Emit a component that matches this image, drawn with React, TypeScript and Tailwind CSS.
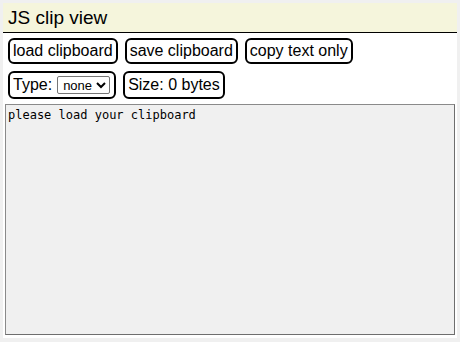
import { useState } from "react";

export default function App() {
  const [type, setType] = useState("none");

  return (
    <div className="min-h-[342px] bg-[#f0f0f0] p-[3px] font-['Liberation_Sans',Arial,sans-serif] text-black">
      <div className="bg-white pb-[3px]">
        <div className="flex h-[30px] items-center border-b border-black bg-[#f5f5dc] px-[5px] text-[19px] leading-none">
          JS clip view
        </div>

        <div className="flex gap-[7px] px-[5px] pt-[5px] text-[16px] leading-none">
          <button className="h-[26px] rounded-[6px] border-2 border-black px-[3px]">load clipboard</button>
          <button className="h-[26px] rounded-[6px] border-2 border-black px-[3px]">save clipboard</button>
          <button className="h-[26px] rounded-[6px] border-2 border-black px-[3px]">copy text only</button>
        </div>

        <div className="flex gap-[7px] px-[5px] pt-[7px] text-[16px] leading-none">
          <label className="flex h-[28px] items-center gap-[5px] rounded-[6px] border-2 border-black pl-[3px] pr-[4px]">
            Type:
            <select
              value={type}
              onChange={(e) => setType(e.target.value)}
              className="h-[18px] w-[53px] rounded-[2px] border border-[#767676] bg-white pl-[1px] text-[13px] leading-none"
            >
              <option value="none">none</option>
              <option value="text">text</option>
              <option value="html">html</option>
            </select>
          </label>
          <div className="flex h-[28px] items-center rounded-[6px] border-2 border-black px-[3px]">Size: 0 bytes</div>
        </div>

        <div className="px-[2px] pt-[5px]">
          <textarea
            readOnly
            value="please load your clipboard"
            className="block h-[231px] w-full resize-none border border-[#8a8a8a] border-b-[#6e6e6e] border-r-[#6e6e6e] bg-[#f0f0f0] px-[2px] pt-[3px] font-['DejaVu_Sans_Mono',monospace] text-[12px] leading-[15px] outline-none"
          />
        </div>
      </div>
    </div>
  );
}
